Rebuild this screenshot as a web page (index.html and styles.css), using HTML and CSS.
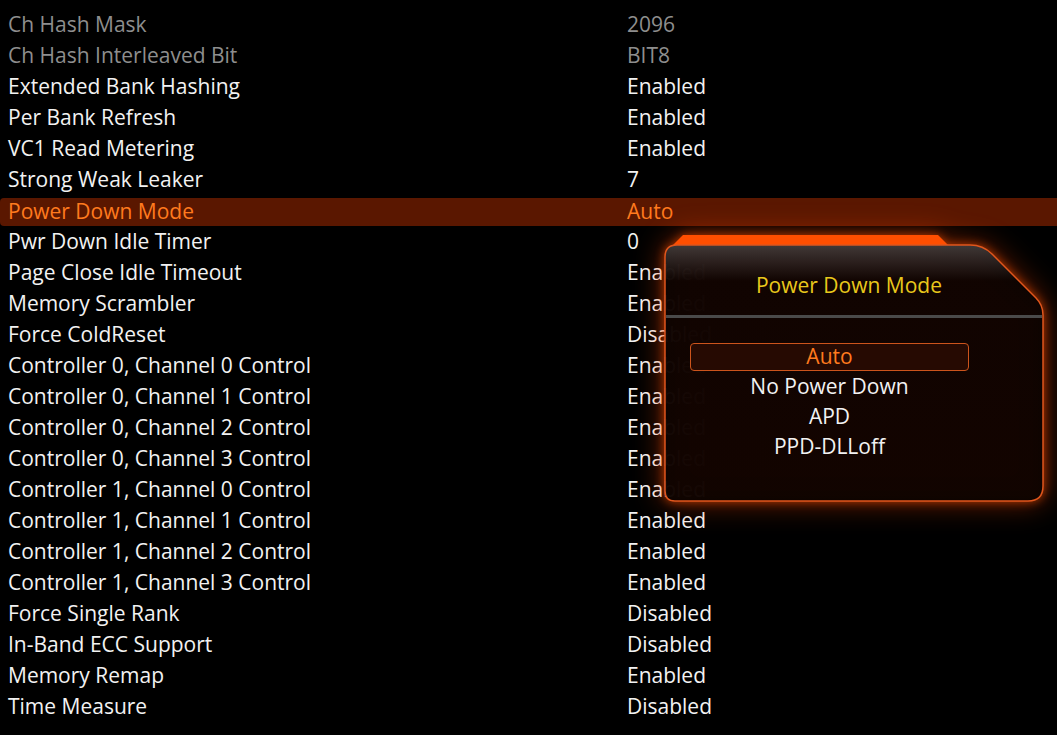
FILE: index.html
```html
<!DOCTYPE html>
<html lang="en">
<head>
    <meta charset="UTF-8">
    <title>Memory Settings</title>
    <link rel="stylesheet" href="styles.css">
</head>
<body>
    <div class="settings">
        <div class="row dim"><span class="label">Ch Hash Mask</span><span class="value">2096</span></div>
        <div class="row dim"><span class="label">Ch Hash Interleaved Bit</span><span class="value">BIT8</span></div>
        <div class="row"><span class="label">Extended Bank Hashing</span><span class="value">Enabled</span></div>
        <div class="row"><span class="label">Per Bank Refresh</span><span class="value">Enabled</span></div>
        <div class="row"><span class="label">VC1 Read Metering</span><span class="value">Enabled</span></div>
        <div class="row"><span class="label">Strong Weak Leaker</span><span class="value">7</span></div>
        <div class="row active"><span class="label">Power Down Mode</span><span class="value">Auto</span></div>
        <div class="row"><span class="label">Pwr Down Idle Timer</span><span class="value">0</span></div>
        <div class="row"><span class="label">Page Close Idle Timeout</span><span class="value">Enabled</span></div>
        <div class="row"><span class="label">Memory Scrambler</span><span class="value">Enabled</span></div>
        <div class="row"><span class="label">Force ColdReset</span><span class="value">Disabled</span></div>
        <div class="row"><span class="label">Controller 0, Channel 0 Control</span><span class="value">Enabled</span></div>
        <div class="row"><span class="label">Controller 0, Channel 1 Control</span><span class="value">Enabled</span></div>
        <div class="row"><span class="label">Controller 0, Channel 2 Control</span><span class="value">Enabled</span></div>
        <div class="row"><span class="label">Controller 0, Channel 3 Control</span><span class="value">Enabled</span></div>
        <div class="row"><span class="label">Controller 1, Channel 0 Control</span><span class="value">Enabled</span></div>
        <div class="row"><span class="label">Controller 1, Channel 1 Control</span><span class="value">Enabled</span></div>
        <div class="row"><span class="label">Controller 1, Channel 2 Control</span><span class="value">Enabled</span></div>
        <div class="row"><span class="label">Controller 1, Channel 3 Control</span><span class="value">Enabled</span></div>
        <div class="row"><span class="label">Force Single Rank</span><span class="value">Disabled</span></div>
        <div class="row"><span class="label">In-Band ECC Support</span><span class="value">Disabled</span></div>
        <div class="row"><span class="label">Memory Remap</span><span class="value">Enabled</span></div>
        <div class="row"><span class="label">Time Measure</span><span class="value">Disabled</span></div>
    </div>

    <div class="popup">
        <svg class="popup-frame" width="378" height="256" viewBox="0 0 378 256" xmlns="http://www.w3.org/2000/svg">
            <defs>
                <linearGradient id="frameFill" x1="0" y1="0" x2="0" y2="1">
                    <stop offset="0" stop-color="#3a3a3a"/>
                    <stop offset="0.14" stop-color="#050201"/>
                    <stop offset="1" stop-color="#070200"/>
                </linearGradient>
            </defs>
            <path class="tab" d="M8,0 L18,-10 L273,-10 L283,0 Z" fill="#ff4e00"/>
            <path class="shape" d="M0,12 Q0,0 12,0 L305,0 Q318,0 327,9 L371,53 Q378,60 378,70 L378,241 Q378,256 363,256 L10,256 Q0,256 0,246 Z"
                  fill="url(#frameFill)" fill-opacity="0.94" stroke="#e0561c" stroke-width="1.5"/>
            <rect x="1" y="70" width="376" height="3" fill="#4a4a4a"/>
        </svg>
        <div class="popup-title">Power Down Mode</div>
        <ul class="options">
            <li class="selected">Auto</li>
            <li>No Power Down</li>
            <li>APD</li>
            <li>PPD-DLLoff</li>
        </ul>
    </div>
</body>
</html>
```

FILE: styles.css
```css
body {
    margin: 0;
    background-color: #000;
    font-family: "Open Sans", "Noto Sans", sans-serif;
    font-size: 21px;
    color: #f2f2f2;
    width: 1057px;
    height: 735px;
    overflow: hidden;
    position: relative;
}
.settings {
    padding-top: 9px;
}
.row {
    display: flex;
    height: 31px;
    line-height: 31px;
    white-space: nowrap;
}
.row .label {
    width: 619px;
    padding-left: 8px;
}
.row.dim {
    color: #8e8e8e;
}
.row.active {
    background-color: #5a1700;
    color: #ff7a1e;
    border-radius: 4px 0 0 4px;
    height: 28px;
    line-height: 26px;
    margin-top: 3px;
}
.popup {
    position: absolute;
    left: 665px;
    top: 245px;
    width: 378px;
    height: 256px;
}
.popup-frame {
    position: absolute;
    left: 0;
    top: 0;
    overflow: visible;
    filter: drop-shadow(0 0 5px rgba(255, 80, 0, 0.6)) drop-shadow(0 0 14px rgba(255, 70, 0, 0.45));
}
.popup-title {
    position: relative;
    height: 73px;
    line-height: 80px;
    text-align: center;
    color: #e9c81c;
    padding-right: 10px;
}
.options {
    position: relative;
    list-style: none;
    margin: 0;
    padding: 25px 74px 0 25px;
}
.options li {
    height: 30px;
    line-height: 28px;
    text-align: center;
    border: 1px solid transparent;
    border-radius: 4px;
    box-sizing: border-box;
}
.options li.selected {
    height: 28px;
    line-height: 24px;
    padding-bottom: 2px;
    color: #ff7a1e;
    background-color: #260a02;
    border-color: #cc541c;
}
```
